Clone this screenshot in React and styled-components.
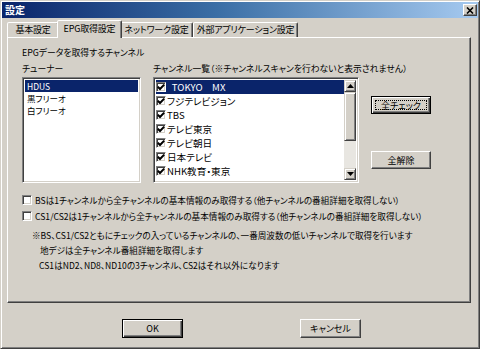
import React from "react";
import styled, { createGlobalStyle, css } from "styled-components";

const Global = createGlobalStyle`
  html, body { margin: 0; padding: 0; background: #d4d0c8; }
  body { font-family: "Noto Sans CJK JP", "Noto Sans", sans-serif; }
  * { box-sizing: border-box; }
`;

const FONT = `"Noto Sans CJK JP", "Noto Sans", sans-serif`;

const Window = styled.div`
  width: 480px;
  height: 349px;
  background: #d4d0c8;
  border: 1px solid;
  border-color: #d4d0c8 #404040 #404040 #d4d0c8;
  box-shadow: inset 1px 1px #ffffff, inset -1px -1px #808080;
  padding: 1px 1px 0 1px;
  display: flex;
  flex-direction: column;
  font-family: ${FONT};
  font-feature-settings: "palt";
  color: #000;
`;

const TitleBar = styled.div`
  height: 16px;
  background: linear-gradient(to right, #0a246a 0%, #3a6ea5 45%, #a6caf0 100%);
  display: flex;
  align-items: center;
  justify-content: space-between;
  padding: 0 1px 0 3px;
`;

const TitleText = styled.span`
  color: #fff;
  font-weight: bold;
  font-size: 10px;
  line-height: 16px;
`;

const CloseButton = styled.div`
  width: 14px;
  height: 12px;
  background: #d4d0c8;
  border: 1px solid;
  border-color: #ffffff #404040 #404040 #ffffff;
  box-shadow: inset -1px -1px #808080;
  display: flex;
  align-items: center;
  justify-content: center;
`;

const Content = styled.div`
  flex: 1;
  display: flex;
  flex-direction: column;
  padding: 2px 7px 0 5px;
`;

const TabStrip = styled.div`
  height: 17px;
  display: flex;
  align-items: flex-end;
  position: relative;
  z-index: 2;
`;

const Tab = styled.div`
  width: ${(p) => p.$w}px;
  height: 15px;
  font-size: 9px;
  letter-spacing: -0.2px;
  line-height: 13px;
  text-align: center;
  white-space: nowrap;
  border: 1px solid;
  border-bottom: none;
  border-color: #ffffff #404040 transparent #ffffff;
  box-shadow: inset -1px 0 #808080;
  border-radius: 2px 2px 0 0;
  background: #d4d0c8;
  ${(p) =>
    p.$active &&
    css`
      height: 18px;
      margin: 0 -2px -1px -2px;
      line-height: 15px;
      position: relative;
      z-index: 3;
    `}
`;

const Panel = styled.div`
  height: 266px;
  border: 1px solid;
  border-color: #ffffff #404040 #404040 #ffffff;
  box-shadow: inset -1px -1px #808080;
  padding: 9px 0 0 14px;
  display: flex;
  flex-direction: column;
  font-size: 8.6px;
`;

const Label = styled.div`
  font-size: 8.8px;
  line-height: 11px;
  white-space: nowrap;
`;

const Columns = styled.div`
  margin-top: 5px;
  display: grid;
  grid-template-columns: 119px 206px 60px;
  column-gap: 12px;
`;

const Column = styled.div`
  display: flex;
  flex-direction: column;
  gap: 3px;
`;

const ListBox = styled.div`
  height: 106px;
  background: #fff;
  border: 1px solid;
  border-color: #808080 #ffffff #ffffff #808080;
  box-shadow: inset 1px 1px #404040, inset -1px -1px #d4d0c8;
  padding: 2px;
  display: flex;
  overflow: hidden;
`;

const Items = styled.div`
  flex: 1;
  display: flex;
  flex-direction: column;
`;

const TunerItem = styled.div`
  height: 12px;
  font-size: 8.5px;
  line-height: 12px;
  padding-left: 2px;
  white-space: nowrap;
  ${(p) =>
    p.$selected &&
    css`
      background: #0a246a;
      color: #fff;
    `}
`;

const ChannelItem = styled.div`
  height: 14px;
  display: flex;
  align-items: center;
  gap: 1px;
  font-size: 9.6px;
  white-space: pre;
  ${(p) =>
    p.$selected &&
    css`
      background: #0a246a;
      color: #fff;
    `}
`;

const Box = styled.span`
  width: 10px;
  height: 10px;
  flex: none;
  background: #fff;
  border: 1px solid;
  border-color: #808080 #ffffff #ffffff #808080;
  box-shadow: inset 1px 1px #404040, inset -1px -1px #d4d0c8;
  display: inline-flex;
  align-items: center;
  justify-content: center;
`;

const ScrollBar = styled.div`
  width: 12px;
  flex: none;
  display: flex;
  flex-direction: column;
  background: #e8e6e1;
`;

const ScrollButton = styled.div`
  height: ${(p) => p.$h}px;
  flex: none;
  background: #d4d0c8;
  border: 1px solid;
  border-color: #d4d0c8 #404040 #404040 #d4d0c8;
  box-shadow: inset 1px 1px #ffffff, inset -1px -1px #808080;
  display: flex;
  align-items: center;
  justify-content: center;
`;

const Track = styled.div`
  flex: 1;
`;

const ButtonColumn = styled.div`
  display: flex;
  flex-direction: column;
  padding-top: 33px;
  gap: 37px;
`;

const Button = styled.button`
  width: ${(p) => p.$w || 60}px;
  height: ${(p) => p.$h || 18}px;
  padding: 0;
  background: #d4d0c8;
  font-family: ${FONT};
  font-feature-settings: "palt";
  font-size: 9px;
  color: #000;
  border: 1px solid;
  border-color: #ffffff #404040 #404040 #ffffff;
  box-shadow: inset -1px -1px #808080;
  position: relative;
  ${(p) =>
    p.$default &&
    css`
      border-color: #000;
      box-shadow: inset 1px 1px #ffffff, inset -1px -1px #404040,
        inset -2px -2px #808080;
    `}
  ${(p) =>
    p.$focus &&
    css`
      &::after {
        content: "";
        position: absolute;
        inset: 3px;
        border: 1px dotted #000;
      }
    `}
`;

const Options = styled.div`
  margin-top: 9px;
  display: flex;
  flex-direction: column;
`;

const OptionRow = styled.div`
  height: 16px;
  display: flex;
  align-items: center;
  gap: 3px;
  white-space: nowrap;
`;

const Notes = styled.div`
  margin-top: 4px;
  display: flex;
  flex-direction: column;
`;

const Note = styled.div`
  line-height: 15px;
  padding-left: ${(p) => p.$indent}px;
  white-space: nowrap;
`;

const Footer = styled.div`
  margin-top: 16px;
  display: flex;
  justify-content: center;
  gap: 117px;
  padding-left: 5px;
`;

const CheckMark = () => (
  <svg width="8" height="8" viewBox="0 0 8 8">
    <path d="M0.8 3.8 L3 6 L7.2 1.6" fill="none" stroke="#000" strokeWidth="2" />
  </svg>
);

const Arrow = ({ up }) => (
  <svg width="7" height="4" viewBox="0 0 7 4">
    <path d={up ? "M0 4 L3.5 0 L7 4 Z" : "M0 0 L3.5 4 L7 0 Z"} fill="#000" />
  </svg>
);

const tuners = ["HDUS", "黒フリーオ", "白フリーオ"];
const channels = [
  "\u2002TOKYO\u3000MX",
  "フジテレビジョン",
  "TBS",
  "テレビ東京",
  "テレビ朝日",
  "日本テレビ",
  "NHK教育・東京",
];

export default function App() {
  return (
    <>
      <Global />
      <Window>
        <TitleBar>
          <TitleText>設定</TitleText>
          <CloseButton>
            <svg width="8" height="7" viewBox="0 0 8 7">
              <path d="M1 0.5 L7 6.5 M7 0.5 L1 6.5" stroke="#000" strokeWidth="1.6" />
            </svg>
          </CloseButton>
        </TitleBar>
        <Content>
          <TabStrip>
            <Tab $w={52}>基本設定</Tab>
            <Tab $w={65} $active>
              EPG取得設定
            </Tab>
            <Tab $w={73}>ネットワーク設定</Tab>
            <Tab $w={105}>外部アプリケーション設定</Tab>
          </TabStrip>
          <Panel>
            <Label>EPGデータを取得するチャンネル</Label>
            <Columns>
              <Column>
                <Label>チューナー</Label>
                <ListBox>
                  <Items>
                    {tuners.map((t, i) => (
                      <TunerItem key={t} $selected={i === 0}>
                        {t}
                      </TunerItem>
                    ))}
                  </Items>
                </ListBox>
              </Column>
              <Column>
                <Label>チャンネル一覧（※チャンネルスキャンを行わないと表示されません）</Label>
                <ListBox>
                  <Items>
                    {channels.map((c, i) => (
                      <ChannelItem key={c} $selected={i === 0}>
                        <Box>
                          <CheckMark />
                        </Box>
                        {c}
                      </ChannelItem>
                    ))}
                  </Items>
                  <ScrollBar>
                    <ScrollButton $h={12}>
                      <Arrow up />
                    </ScrollButton>
                    <ScrollButton $h={49} />
                    <Track />
                    <ScrollButton $h={12}>
                      <Arrow />
                    </ScrollButton>
                  </ScrollBar>
                </ListBox>
              </Column>
              <ButtonColumn>
                <Button $default $focus>
                  全チェック
                </Button>
                <Button>全解除</Button>
              </ButtonColumn>
            </Columns>
            <Options>
              <OptionRow>
                <Box />
                BSは1チャンネルから全チャンネルの基本情報のみ取得する（他チャンネルの番組詳細を取得しない）
              </OptionRow>
              <OptionRow>
                <Box />
                CS1/CS2は1チャンネルから全チャンネルの基本情報のみ取得する（他チャンネルの番組詳細を取得しない）
              </OptionRow>
            </Options>
            <Notes>
              <Note $indent={10}>
                ※BS、CS1/CS2ともにチェックの入っているチャンネルの、一番周波数の低いチャンネルで取得を行います
              </Note>
              <Note $indent={18}>地デジは全チャンネル番組詳細を取得します</Note>
              <Note $indent={17}>CS1はND2、ND8、ND10の3チャンネル、CS2はそれ以外になります</Note>
            </Notes>
          </Panel>
          <Footer>
            <Button $w={61} $h={19} $default>
              OK
            </Button>
            <Button $w={61} $h={19}>
              キャンセル
            </Button>
          </Footer>
        </Content>
      </Window>
    </>
  );
}
